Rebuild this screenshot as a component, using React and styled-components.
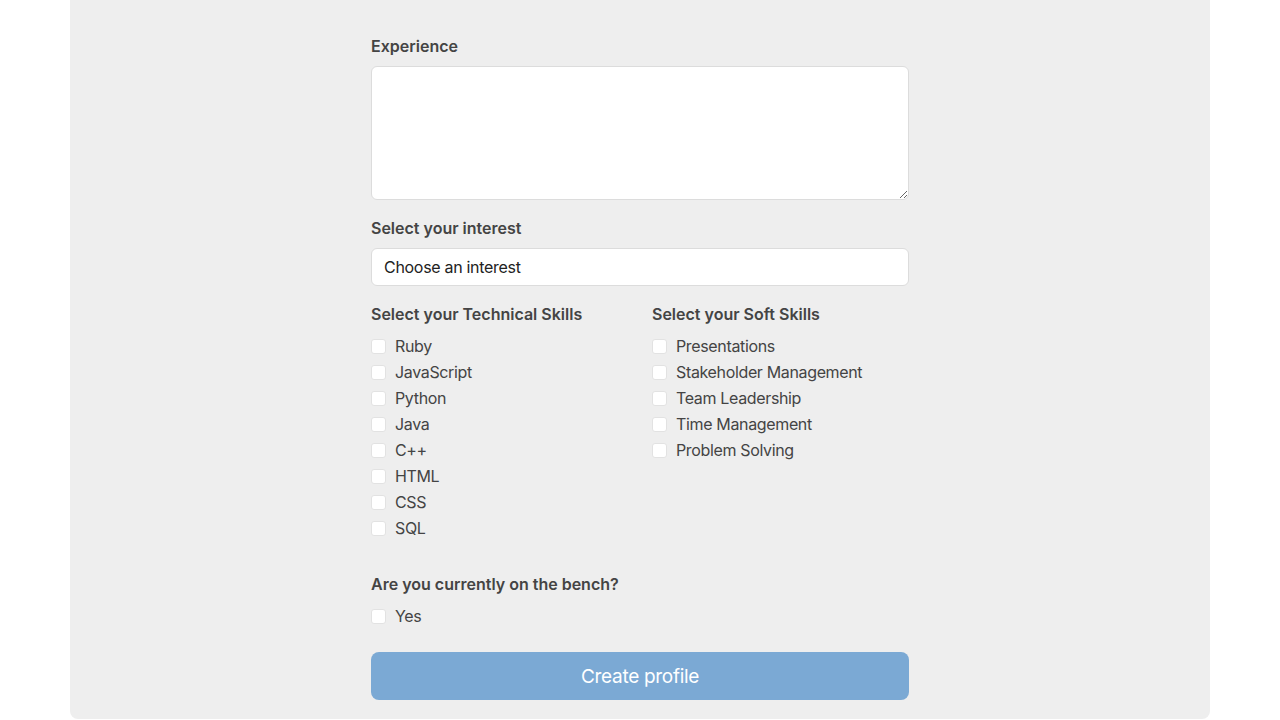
import styled, { createGlobalStyle } from 'styled-components';

const technical = ['Ruby', 'JavaScript', 'Python', 'Java', 'C++', 'HTML', 'CSS', 'SQL'];
const soft = ['Presentations', 'Stakeholder Management', 'Team Leadership', 'Time Management', 'Problem Solving'];

export default function App() {
    return (
        <Page>
            <GlobalStyle />
            <Panel>
                <Form>
                    <Field>
                        <Label>Experience</Label>
                        <TextArea />
                    </Field>
                    <Field>
                        <Label>Select your interest</Label>
                        <Select defaultValue="">
                            <option value="">Choose an interest</option>
                        </Select>
                    </Field>
                    <Columns>
                        <div>
                            <Label $gap={9}>Select your Technical Skills</Label>
                            {technical.map((s) => (
                                <Check key={s}>
                                    <Box type="checkbox" />
                                    {s}
                                </Check>
                            ))}
                        </div>
                        <div>
                            <Label $gap={9}>Select your Soft Skills</Label>
                            {soft.map((s) => (
                                <Check key={s}>
                                    <Box type="checkbox" />
                                    {s}
                                </Check>
                            ))}
                        </div>
                    </Columns>
                    <Bench>
                        <Label $gap={9}>Are you currently on the bench?</Label>
                        <Check>
                            <Box type="checkbox" />
                            Yes
                        </Check>
                    </Bench>
                    <Button>Create profile</Button>
                </Form>
            </Panel>
        </Page>
    );
}

const GlobalStyle = createGlobalStyle`
    * { box-sizing: border-box; }
    body {
        margin: 0;
        background: #fff;
        font-family: Inter, "Noto Sans", sans-serif;
        color: #444;
    }
`;

const Page = styled.div`
    display: flex;
    justify-content: center;
`;

const Panel = styled.div`
    width: 1140px;
    background: #eeeeee;
    border-radius: 0 0 8px 8px;
    padding: 37px 0 19px;
    display: flex;
    justify-content: center;
`;

const Form = styled.div`
    width: 538px;
`;

const Field = styled.div`
    margin-bottom: 19px;
`;

const Label = styled.div`
    font-size: 16px;
    line-height: 19px;
    font-weight: 600;
    color: #444;
    margin-bottom: ${(p) => p.$gap ?? 10}px;
`;

const TextArea = styled.textarea`
    display: block;
    width: 100%;
    height: 134px;
    border: 1px solid #dcdcdc;
    border-radius: 6px;
    background: #fff;
    resize: vertical;
`;

const Select = styled.select`
    display: block;
    width: 100%;
    height: 38px;
    border: 1px solid #dcdcdc;
    border-radius: 6px;
    background: #fff;
    appearance: none;
    padding: 0 12px;
    font-family: Inter, "Noto Sans", sans-serif;
    font-size: 16px;
    letter-spacing: -0.3px;
    color: #222;
`;

const Columns = styled.div`
    display: grid;
    grid-template-columns: 1fr 1fr;
    column-gap: 24px;
`;

const Check = styled.label`
    display: flex;
    align-items: center;
    height: 26px;
    font-size: 16px;
    letter-spacing: -0.35px;
    color: #444;
`;

const Box = styled.input`
    appearance: none;
    width: 15px;
    height: 15px;
    margin: 0 9px 0 0;
    background: #fff;
    border: 1px solid #e2e2e2;
    border-radius: 3px;
`;

const Bench = styled.div`
    margin-top: 34px;
`;

const Button = styled.button`
    display: block;
    width: 100%;
    height: 48px;
    margin-top: 23px;
    border: none;
    border-radius: 8px;
    background: #7ba9d4;
    color: #fff;
    font-family: Inter, "Noto Sans", sans-serif;
    font-size: 19px;
    letter-spacing: -0.3px;
`;
